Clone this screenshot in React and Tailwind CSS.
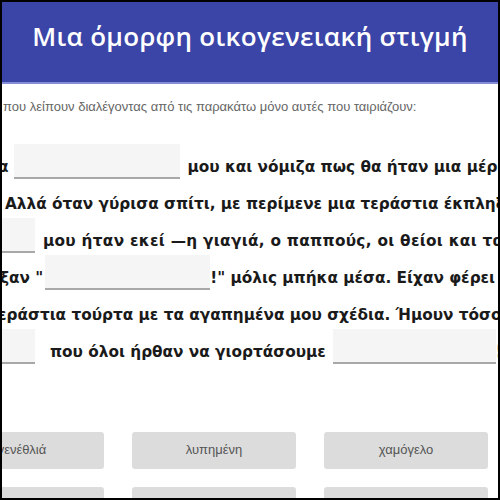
export default function App() {
  const blank = "bg-[#f5f5f5] border-b-2 border-[#a8a8a8] h-[35px] shrink-0";
  const line = "flex items-end h-[37px] whitespace-nowrap";
  const txt = "leading-none pb-[3px]";

  return (
    <div className="w-[500px] h-[500px] overflow-hidden border-2 border-black bg-white">
      <div className="h-[82px] bg-[#3b44a7] border-b-2 border-[#858cd8] flex justify-center pt-[21px]">
        <h1 className="text-white text-[26px] font-semibold font-['Open_Sans',sans-serif] leading-none tracking-[0.3px]">
          Μια όμορφη οικογενειακή στιγμή
        </h1>
      </div>

      <p className="mt-[13px] pl-[1px] text-[13px] text-[#666] font-['Liberation_Sans',Arial,sans-serif] whitespace-nowrap">
        που λείπουν διαλέγοντας από τις παρακάτω μόνο αυτές που ταιριάζουν:
      </p>

      <div className="mt-[25px] font-['DejaVu_Sans',sans-serif] font-bold text-[15.3px] text-[#1a1a1a]">
        <div className={line}>
          <span className={txt + " -ml-[4px]"}>α</span>
          <div className={blank + " w-[166px] ml-[5px]"} />
          <span className={txt + " ml-[8px]"}>μου και νόμιζα πως θα ήταν μια μέρα</span>
        </div>
        <div className={line}>
          <span className={txt + " ml-[3px]"}>Αλλά όταν γύρισα σπίτι, με περίμενε μια τεράστια έκπληξη</span>
        </div>
        <div className={line}>
          <div className={blank + " w-[33px]"} />
          <span className={txt + " ml-[8px] tracking-[0.3px]"}>μου ήταν εκεί —η γιαγιά, ο παππούς, οι θείοι και τα</span>
        </div>
        <div className={line}>
          <span className={txt + " -ml-[2px]"}>ξαν "</span>
          <div className={blank + " w-[165px] ml-[2px]"} />
          <span className={txt}>!" μόλις μπήκα μέσα. Είχαν φέρει</span>
        </div>
        <div className={line}>
          <span className={txt + " -ml-[4px]"}>εράστια τούρτα με τα αγαπημένα μου σχέδια. Ήμουν τόσο</span>
        </div>
        <div className={line}>
          <div className={blank + " w-[33px]"} />
          <span className={txt + " ml-[15px]"}>που όλοι ήρθαν να γιορτάσουμε</span>
          <div className={blank + " w-[163px] ml-[7px]"} />
          <span className={txt}>!</span>
        </div>
      </div>

      <div className="mt-[68px] -ml-[62px] grid grid-cols-[164px_164px_164px_164px] gap-x-[28px] gap-y-[18px] font-['Liberation_Sans',Arial,sans-serif] text-[13px] text-[#555]">
        {["γενέθλιά", "λυπημένη", "χαμόγελο", "", "", "", "", ""].map((w, i) => (
          <button key={i} className="h-[37px] bg-[#dcdcdc] rounded-[3px] flex items-center justify-center">
            {w}
          </button>
        ))}
      </div>
    </div>
  );
}
